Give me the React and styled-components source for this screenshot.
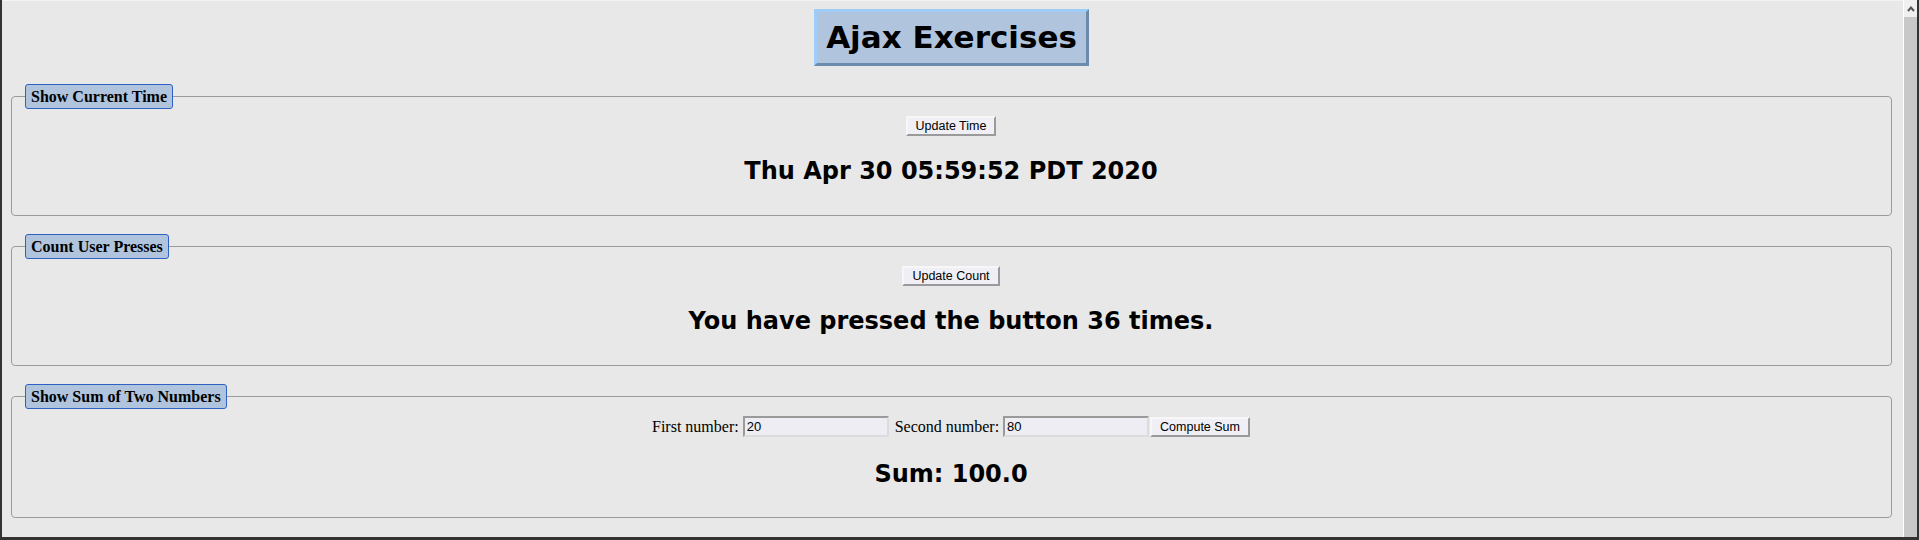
import React from "react";
import styled, { createGlobalStyle } from "styled-components";

const GlobalStyle = createGlobalStyle`
  html, body {
    margin: 0;
    padding: 0;
    overflow: hidden;
  }
  body {
    font-family: "Liberation Serif", serif;
  }
`;

const App = () => {
  return (
    <Window>
      <GlobalStyle />
      <Body>
        <LeftEdge />
        <Page>
          <Title>Ajax Exercises</Title>
          <Section>
            <Legend>Show Current Time</Legend>
            <Controls>
              <Button>Update Time</Button>
            </Controls>
            <Result>Thu Apr 30 05:59:52 PDT 2020</Result>
          </Section>
          <Section>
            <Legend>Count User Presses</Legend>
            <Controls>
              <Button>Update Count</Button>
            </Controls>
            <Result>You have pressed the button 36 times.</Result>
          </Section>
          <Section $extra={-1}>
            <Legend>Show Sum of Two Numbers</Legend>
            <Controls>
              <Label>First number:</Label>
              <Input defaultValue="20" />
              <Label $gapLeft={6}>Second number:</Label>
              <Input defaultValue="80" />
              <Button $gapLeft={1}>Compute Sum</Button>
            </Controls>
            <Result $shift={2}>Sum: 100.0</Result>
          </Section>
        </Page>
        <Scrollbar>
          <ScrollArrow>
            <svg width="8" height="6" viewBox="0 0 8 6">
              <polyline
                points="1,5 4,1.5 7,5"
                fill="none"
                stroke="#555"
                strokeWidth="2"
              />
            </svg>
          </ScrollArrow>
          <ScrollTrack />
        </Scrollbar>
      </Body>
      <BottomEdge />
    </Window>
  );
};

export default App;

const Window = styled.div`
  width: 1919px;
  height: 540px;
  display: flex;
  flex-direction: column;
  background: #e8e8e8;
`;

const Body = styled.div`
  flex: 1;
  display: flex;
  min-height: 0;
`;

const LeftEdge = styled.div`
  width: 2px;
  background: #333333;
`;

const BottomEdge = styled.div`
  height: 3px;
  background: #333333;
`;

const Page = styled.div`
  flex: 1;
  display: flex;
  flex-direction: column;
  align-items: stretch;
  gap: 18px;
  padding: 8px 11px 0 9px;
  border-top: 1px solid #f3f3f3;
  background: #e8e8e8;
  overflow: hidden;
`;

const Title = styled.h1`
  align-self: center;
  margin: 0;
  padding: 7px 9px;
  font-family: "DejaVu Sans", Verdana, sans-serif;
  font-size: 31px;
  font-weight: bold;
  line-height: 37px;
  color: #000;
  background: #b0c4de;
  border: 3px solid;
  border-color: #9fcdfa #6a8bab #6a8bab #9fcdfa;
`;

const Section = styled.fieldset`
  margin: 0;
  padding: 7px 14px ${(p) => 30 + (p.$extra || 0)}px 13px;
  border: 1px solid #9c9c9c;
  border-radius: 4px;
  min-width: 0;
`;

const Legend = styled.legend`
  padding: 0 5px;
  height: 25px;
  box-sizing: border-box;
  line-height: 23px;
  font-family: "Liberation Serif", serif;
  font-size: 16px;
  font-weight: bold;
  color: #000;
  background: #b0c4de;
  border: 1px solid #2d62c4;
  border-radius: 3px;
`;

const Controls = styled.div`
  display: flex;
  justify-content: center;
  align-items: center;
  min-height: 20px;
`;

const Label = styled.span`
  font-family: "Liberation Serif", serif;
  font-size: 16px;
  color: #000;
  margin-right: 4px;
  margin-left: ${(p) => (p.$gapLeft ? `${p.$gapLeft}px` : "0")};
`;

const Input = styled.input`
  box-sizing: border-box;
  width: 146px;
  height: 21px;
  margin: 0;
  padding: 0 2px;
  font-family: "Liberation Sans", Arial, sans-serif;
  font-size: 13px;
  color: #000;
  background: #ededf3;
  border: 2px solid;
  border-color: #9a9a9a #dcdcdc #dcdcdc #9a9a9a;
  outline: none;
`;

const Button = styled.button`
  box-sizing: border-box;
  height: 20px;
  margin: 0 0 0 ${(p) => (p.$gapLeft ? `${p.$gapLeft}px` : "0")};
  padding: 0 8px;
  font-family: "Liberation Sans", Arial, sans-serif;
  font-size: 12.5px;
  line-height: 16px;
  color: #000;
  background: #efeff5;
  border: 2px solid;
  border-color: #f7f7f7 #9a9a9a #9a9a9a #f7f7f7;
  border-radius: 0;
`;

const Result = styled.h2`
  margin: ${(p) => 21 + (p.$shift || 0)}px 0 0;
  font-family: "DejaVu Sans", Verdana, sans-serif;
  font-size: 24px;
  font-weight: bold;
  line-height: 28px;
  text-align: center;
  color: #000;
`;

const Scrollbar = styled.div`
  width: 13px;
  display: flex;
  flex-direction: column;
  border-left: 1px solid #ffffff;
  border-right: 2px solid #333333;
`;

const ScrollArrow = styled.div`
  height: 17px;
  display: flex;
  align-items: center;
  justify-content: center;
  background: #f0f0f0;
`;

const ScrollTrack = styled.div`
  flex: 1;
  background: #c8c8c8;
`;
